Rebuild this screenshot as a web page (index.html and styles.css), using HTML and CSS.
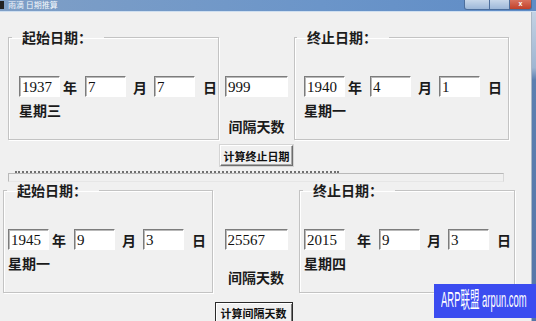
FILE: index.html
```html
<!DOCTYPE html>
<html lang="zh-CN">
<head>
    <meta charset="UTF-8">
    <meta name="viewport" content="width=device-width, initial-scale=1.0">
    <title>雨滴 日期推算</title>
    <link rel="stylesheet" href="styles.css">
</head>
<body>
    <div class="window">
        <div class="titlebar">
            <span class="app-icon"></span>
            <span class="title">雨滴 日期推算</span>
            <div class="caption">
                <span class="cap-btn cap-min"></span>
                <span class="cap-btn cap-max"></span>
                <span class="cap-btn cap-close">x</span>
            </div>
        </div>
        <div class="frame">
            <div class="client">
                <!-- 起始日期 + 天数 -> 终止日期 -->
                <div class="panel panel-top">
                    <fieldset class="group g-start">
                        <legend>起始日期：</legend>
                        <div class="group-body">
                            <div class="date-row">
                                <input class="field" type="text" value="1937">
                                <span class="unit u-year">年</span>
                                <input class="field" type="text" value="7">
                                <span class="unit u-month">月</span>
                                <input class="field" type="text" value="7">
                                <span class="unit u-day">日</span>
                            </div>
                            <div class="weekday">星期三</div>
                        </div>
                    </fieldset>
                    <div class="mid">
                        <input class="field field-days" type="text" value="999">
                        <div class="mid-label">间隔天数</div>
                        <button class="btn" type="button">计算终止日期</button>
                    </div>
                    <fieldset class="group g-end">
                        <legend>终止日期：</legend>
                        <div class="group-body">
                            <div class="date-row">
                                <input class="field" type="text" value="1940">
                                <span class="unit u-year">年</span>
                                <input class="field" type="text" value="4">
                                <span class="unit u-month">月</span>
                                <input class="field" type="text" value="1">
                                <span class="unit u-day">日</span>
                            </div>
                            <div class="weekday">星期一</div>
                        </div>
                    </fieldset>
                </div>

                <div class="separator">
                    <div class="dots"></div>
                </div>

                <!-- 起始日期 + 终止日期 -> 天数 -->
                <div class="panel panel-bottom">
                    <fieldset class="group g-start">
                        <legend>起始日期：</legend>
                        <div class="group-body">
                            <div class="date-row">
                                <input class="field" type="text" value="1945">
                                <span class="unit u-year">年</span>
                                <input class="field" type="text" value="9">
                                <span class="unit u-month">月</span>
                                <input class="field" type="text" value="3">
                                <span class="unit u-day">日</span>
                            </div>
                            <div class="weekday">星期一</div>
                        </div>
                    </fieldset>
                    <div class="mid">
                        <input class="field field-days" type="text" value="25567">
                        <div class="mid-label">间隔天数</div>
                        <button class="btn btn-default" type="button">计算间隔天数</button>
                    </div>
                    <fieldset class="group g-end">
                        <legend>终止日期：</legend>
                        <div class="group-body">
                            <div class="date-row">
                                <input class="field" type="text" value="2015">
                                <span class="unit u-year">年</span>
                                <input class="field" type="text" value="9">
                                <span class="unit u-month">月</span>
                                <input class="field" type="text" value="3">
                                <span class="unit u-day">日</span>
                            </div>
                            <div class="weekday">星期四</div>
                        </div>
                    </fieldset>
                </div>
            </div>
            <div class="side"></div>
        </div>
        <div class="watermark"><span>ARP联盟 arpun.com</span></div>
    </div>
</body>
</html>
```

FILE: styles.css
```css
body {
    margin: 0;
    background-color: #f0f0f0;
    font-family: "Noto Sans CJK SC", "Liberation Sans", sans-serif;
    color: #1a1a1a;
}
.window {
    position: relative;
    width: 536px;
    height: 321px;
    overflow: hidden;
}
.titlebar {
    display: flex;
    align-items: flex-start;
    height: 11px;
    background: linear-gradient(to right, #7f9fc6, #6b95c9 60%, #5f8cc6);
    border-bottom: 1px solid #cfdff0;
}
.app-icon {
    width: 4px;
    height: 8px;
    margin-top: 1px;
    background-color: #222;
}
.title {
    margin-left: 4px;
    font-size: 8px;
    line-height: 9px;
    color: #f4f8fc;
}
.caption {
    display: flex;
    margin-left: auto;
    margin-right: 4px;
}
.cap-btn {
    height: 9px;
    border: 1px solid #4d6f9c;
    border-top: none;
    background: linear-gradient(#c8d8ea, #9db8d8);
}
.cap-min {
    width: 24px;
    border-radius: 0 0 0 3px;
}
.cap-max {
    width: 19px;
    border-left: none;
}
.cap-close {
    width: 21px;
    border-left: none;
    border-radius: 0 0 3px 0;
    background: linear-gradient(#d9725e, #c1412a);
    color: #fff;
    font-family: "Liberation Sans", sans-serif;
    font-size: 7px;
    font-weight: 700;
    line-height: 7px;
    text-align: center;
}
.frame {
    display: flex;
    height: 309px;
}
.client {
    width: 531px;
    background-color: #f0f0f0;
}
.side {
    flex: 1;
    border-left: 1px solid #a9b7c6;
    background: linear-gradient(#c3d2e3, #9fb6d2 18%, #5b7fb0 22%, #5576a8);
}

.panel {
    display: flex;
    align-items: flex-start;
}
.panel-top {
    margin-top: 17px;
}

.group {
    box-sizing: border-box;
    height: 111px;
    margin: 0;
    padding: 31px 0 0;
    border: 1px solid #c3c3c3;
    box-shadow: 1px 1px 0 #ffffff, inset 1px 1px 0 #ffffff;
    min-width: 0;
}
.group legend {
    margin-left: 3px;
    padding: 0 12px 0 10px;
    font-size: 14px;
    line-height: 16px;
    font-weight: 700;
    color: #1c1c1c;
}
.group-body {
    padding-left: 4px;
}
.panel-top .g-start {
    margin-left: 8px;
    width: 211px;
}
.panel-top .g-start .group-body {
    padding-left: 10px;
}
.panel-top .g-end {
    width: 215px;
}
.panel-top .g-end legend {
    margin-left: 2px;
}
.panel-top .g-end .group-body {
    padding-left: 9px;
}
.panel-bottom .g-start {
    margin-left: 3px;
    width: 210px;
}
.panel-bottom .g-end {
    width: 216px;
}
.panel-bottom .g-end .u-year {
    margin: 0 8px 0 12px;
}

.date-row {
    display: flex;
    align-items: center;
}
.field {
    box-sizing: border-box;
    width: 41px;
    height: 21px;
    margin: 0;
    padding: 1px 2px 0;
    border: 1px solid #ffffff;
    border-top-color: #7c7c7c;
    border-left-color: #7c7c7c;
    box-shadow: inset 1px 1px 0 #b9b9b9;
    background-color: #ffffff;
    font-family: "Liberation Serif", serif;
    font-size: 15px;
    line-height: 18px;
    color: #111;
    outline: none;
}
.unit {
    font-size: 14px;
    line-height: 16px;
    font-weight: 700;
}
.u-year {
    margin: 0 8px 0 3px;
}
.u-month {
    margin: 0 7px 0 7px;
}
.u-day {
    margin-left: 8px;
}
.weekday {
    margin-top: 5px;
    font-size: 14px;
    line-height: 16px;
    font-weight: 700;
}

.mid {
    display: flex;
    flex-direction: column;
    align-items: center;
    padding-top: 47px;
}
.panel-top .mid {
    width: 75px;
}
.panel-bottom .mid {
    width: 86px;
}
.field-days {
    width: 63px;
}
.mid-label {
    margin-top: 21px;
    font-size: 14px;
    line-height: 16px;
    font-weight: 700;
}
.panel-bottom .mid-label {
    margin-top: 19px;
}
.btn {
    box-sizing: border-box;
    width: 73px;
    height: 21px;
    margin-top: 11px;
    padding: 0;
    border: 1px solid #ffffff;
    border-right-color: #6d6d6d;
    border-bottom-color: #6d6d6d;
    box-shadow: inset -1px -1px 0 #a8a8a8, 0 0 0 1px #d4d4d4;
    background-color: #f0f0f0;
    font-family: "Noto Sans CJK SC", sans-serif;
    font-size: 11px;
    font-weight: 700;
    line-height: 18px;
    color: #111;
}
.btn-default {
    width: 78px;
    margin-top: 17px;
    margin-right: 5px;
    border: 1px solid #2a2a2a;
    box-shadow: inset 1px 1px 0 #ffffff, inset -1px -1px 0 #7a7a7a;
}

.separator {
    box-sizing: border-box;
    width: 496px;
    height: 9px;
    margin: 7px 0 0 8px;
    border: 1px solid #b9b9b9;
    border-right-color: #d8d8d8;
    border-bottom-color: #e6e6e6;
}
.dots {
    width: 324px;
    margin: -3px 0 0 6px;
    border-top: 2px dotted #6f6f6f;
}

.watermark {
    position: absolute;
    left: 434px;
    top: 284px;
    width: 102px;
    height: 34px;
    background-color: #3b4cf0;
    color: #ffffff;
    overflow: hidden;
}
.watermark span {
    display: block;
    width: max-content;
    margin: 4px 0 0 7px;
    font-family: "Liberation Sans", "Noto Sans CJK SC", sans-serif;
    font-size: 22px;
    line-height: 24px;
    white-space: nowrap;
    transform: scaleX(0.43);
    transform-origin: 0 0;
}
```
